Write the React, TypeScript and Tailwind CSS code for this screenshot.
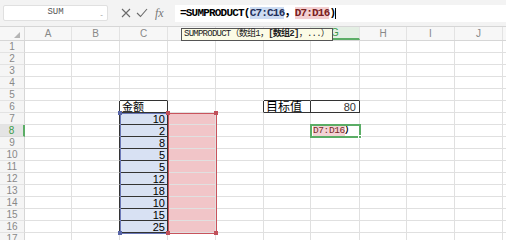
import React from 'react';

const COLS = ['A', 'B', 'C', 'D', 'E', 'F', 'G', 'H', 'I', 'J'];
const WIDTH: Record<string, string> = {
  A: 'w-[47px]', B: 'w-[48px]', C: 'w-[48px]', D: 'w-[48px]', E: 'w-[48px]',
  F: 'w-[47px]', G: 'w-[49px]', H: 'w-[47px]', I: 'w-[48px]', J: 'w-[48px]',
};
// D, E, F header letters sit under the function tooltip
const HIDDEN_HEADERS = ['D', 'E', 'F'];
const ROWS = Array.from({ length: 17 }, (_, i) => i + 1);
const AMOUNTS: Record<number, number> = { 7: 10, 8: 2, 9: 8, 10: 5, 11: 5, 12: 12, 13: 18, 14: 10, 15: 15, 16: 25 };

const mono = "font-['Liberation_Mono','Noto_Sans_CJK_SC',monospace]";
const sans = "font-['Liberation_Sans','Noto_Sans_CJK_SC',sans-serif]";

// table borders: C6:C16 and F6:G6 are boxed in black
const inTable = (r: number, c: string) =>
  (c === 'C' && r >= 6 && r <= 16) || ((c === 'F' || c === 'G') && r === 6);

const rightBlack = (r: number, c: string) =>
  inTable(r, c) || (c === 'B' && r >= 6 && r <= 16) || (c === 'E' && r === 6);
const bottomBlack = (r: number, c: string) =>
  inTable(r, c) || (c === 'C' && r === 5) || ((c === 'F' || c === 'G') && r === 5);

const Cell: React.FC<{ r: number; c: string }> = ({ r, c }) => {
  let bg = '';
  let content: React.ReactNode = null;
  if (c === 'C' && AMOUNTS[r] !== undefined) {
    bg = 'bg-[#d8e1f3]';
    content = <span className="ml-auto pr-[2px]">{AMOUNTS[r]}</span>;
  }
  if (c === 'D' && r >= 7 && r <= 16) bg = 'bg-[#f1c5c8]';
  if (c === 'C' && r === 6) content = <span className="pl-[2px] text-[11px]">金额</span>;
  if (c === 'F' && r === 6) content = <span className="pl-[2px] text-[12px]">目标值</span>;
  if (c === 'G' && r === 6) content = <span className="ml-auto pr-[3px] text-[#333]">80</span>;
  if (c === 'G' && r === 8)
    content = (
      <span className={`pl-[2px] text-[9.5px] tracking-[-0.4px] ${mono}`}>
        <span className="bg-[#f3d3d5] text-[#7a2a2a]">D7:D16</span>
        <span className="font-bold text-black">）</span>
      </span>
    );
  return (
    <div
      className={`${WIDTH[c]} h-[12px] shrink-0 flex items-center overflow-visible whitespace-nowrap border-r border-b text-[11px] leading-[12px] text-black ${sans} ${bg} ${
        rightBlack(r, c) ? 'border-r-[#333]' : 'border-r-[#e0e0e0]'
      } ${bottomBlack(r, c) ? 'border-b-[#333]' : 'border-b-[#e0e0e0]'}`}
    >
      {content}
    </div>
  );
};

const Handle: React.FC<{ x: number; y: number; color: string }> = ({ x, y, color }) => (
  <div className={`absolute w-[4px] h-[4px] ${color}`} style={{ left: x - 2, top: y - 2 }} />
);

const App: React.FC = () => {
  return (
    <div className={`w-[506px] h-[240px] overflow-hidden bg-white ${sans}`}>
      {/* Formula bar */}
      <div className="h-[27px] bg-[#f3f3f3] border-b border-[#d6d6d6] flex items-center">
        <div className="ml-[3px] w-[105px] h-[16px] bg-white border border-[#e0e0e0] rounded-[2px] flex items-center relative">
          <span className={`mx-auto text-[9px] text-[#555] ${mono}`}>SUM</span>
          <span className="absolute right-[4px] top-[3px] text-[8px] text-[#999]">-</span>
        </div>
        <div className="w-[67px] flex items-center gap-[5px] pl-[13px]">
          <svg width="10" height="10" viewBox="0 0 10 10">
            <path d="M1 1L9 9M9 1L1 9" stroke="#6a6a6a" strokeWidth="1.1" fill="none" />
          </svg>
          <svg width="12" height="10" viewBox="0 0 12 10">
            <path d="M1 5L4.5 8.5L11 1" stroke="#6a6a6a" strokeWidth="1.1" fill="none" />
          </svg>
          <span className="ml-[2px] text-[12px] italic text-[#777] font-['Liberation_Serif',serif]">fx</span>
        </div>
        <div className="flex-1 h-[17px] bg-white flex items-center pl-[5px]">
          <span className={`text-[11px] font-bold tracking-[-0.8px] text-black whitespace-nowrap ${mono}`}>
            =SUMPRODUCT(
            <span className="bg-[#cddcf2] text-[#1f2f5a]">C7:C16</span>
            ，
            <span className="bg-[#f3d0d2] text-[#7a2020]">D7:D16</span>
            )
          </span>
          <span className="w-px h-[11px] bg-black" />
        </div>
      </div>

      {/* Column headers */}
      <div className="h-[14px] flex bg-[#f7f7f7] border-b border-[#d6d6d6] relative">
        <div className="w-[25px] shrink-0 border-r border-[#dcdcdc] flex items-end justify-end pr-[4px] pb-[2px]">
          <svg width="6" height="6" viewBox="0 0 6 6">
            <path d="M6 0L6 6L0 6Z" fill="#b5b5b5" />
          </svg>
        </div>
        {COLS.map((c) => (
          <div
            key={c}
            className={`${WIDTH[c]} shrink-0 border-r border-[#e3e3e3] flex items-center justify-center text-[10px] ${
              c === 'G' ? 'text-[#3c9b4a] bg-[#e4efe4] border-b-2 border-b-[#5bad66]' : 'text-[#888]'
            }`}
          >
            {HIDDEN_HEADERS.includes(c) ? '' : c}
          </div>
        ))}
        <div className="flex-1" />
        {/* function tooltip */}
        <div
          className={`absolute left-[181px] top-[1px] w-[152px] h-[13px] bg-[#fbfbe6] border border-[#555] flex items-center pl-[2px] text-[9px] tracking-[-0.75px] text-[#222] whitespace-nowrap ${mono}`}
        >
          SUMPRODUCT（数组1，<span className="font-bold">[数组2]</span>，...）
        </div>
      </div>

      {/* Sheet body */}
      <div className="relative">
        {ROWS.map((r) => (
          <div key={r} className="flex">
            <div
              className={`w-[25px] h-[12px] shrink-0 flex items-center justify-center border-b text-[10px] leading-[12px] ${
                r === 8
                  ? 'bg-[#e4e4e4] text-[#3c9b4a] border-r-2 border-r-[#5bad66] border-b-[#dadada]'
                  : 'bg-[#f5f5f5] text-[#888] border-r border-r-[#d6d6d6] border-b-[#e3e3e3]'
              }`}
            >
              {r}
            </div>
            {COLS.map((c) => (
              <Cell key={c} r={r} c={c} />
            ))}
            <div className="flex-1 h-[12px] border-b border-[#e0e0e0]" />
          </div>
        ))}

        {/* reference range highlights */}
        <div className="absolute left-[120px] top-[72px] w-[49px] h-[121px] border border-[#6b78b8]" />
        <div className="absolute left-[168px] top-[72px] w-[49px] h-[121px] border border-[#c9535c]" />
        <Handle x={120} y={72} color="bg-[#5866a8]" />
        <Handle x={120} y={192} color="bg-[#5866a8]" />
        <Handle x={168} y={72} color="bg-[#c0505a]" />
        <Handle x={216} y={72} color="bg-[#c0505a]" />
        <Handle x={168} y={192} color="bg-[#c0505a]" />
        <Handle x={216} y={192} color="bg-[#c0505a]" />

        {/* active cell G8 */}
        <div className="absolute left-[310px] top-[83px] w-[51px] h-[14px] border-2 border-[#5bad66]" />
        <div className="absolute left-[358px] top-[94px] w-[4px] h-[4px] bg-[#5bad66] border border-white" />
      </div>
    </div>
  );
};

export default App;
